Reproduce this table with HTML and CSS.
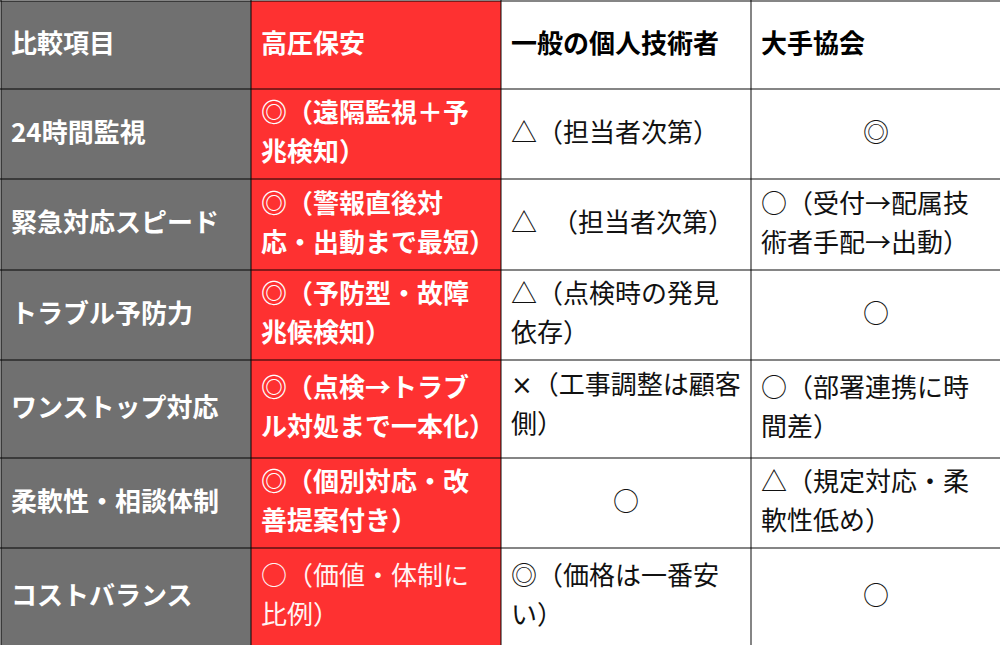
FILE: index.html
```html
<!DOCTYPE html>
<html lang="ja">
<head>
<meta charset="utf-8">
<title>比較表</title>
<link rel="stylesheet" href="styles.css">
</head>
<body>
<table class="cmp">
  <colgroup><col class="c"><col class="c"><col class="c"><col class="c"></colgroup>
  <tr class="r-head">
    <th class="item">比較項目</th>
    <th class="ours">高圧保安</th>
    <th class="other">一般の個人技術者</th>
    <th class="other">大手協会</th>
  </tr>
  <tr class="r90">
    <td class="item">24時間監視</td>
    <td class="ours">◎（遠隔監視＋予兆検知）</td>
    <td class="other">△（担当者次第）</td>
    <td class="other center">◎</td>
  </tr>
  <tr class="r91">
    <td class="item">緊急対応スピード</td>
    <td class="ours">◎（警報直後対応・出動まで最短）</td>
    <td class="other">△<span class="gap"> </span>（担当者次第）</td>
    <td class="other">○（受付→配属技術者手配→出動）</td>
  </tr>
  <tr class="r90">
    <td class="item">トラブル予防力</td>
    <td class="ours">◎（予防型・故障兆候検知）</td>
    <td class="other">△（点検時の発見依存）</td>
    <td class="other center">○</td>
  </tr>
  <tr class="r98">
    <td class="item">ワンストップ対応</td>
    <td class="ours">◎（点検→トラブル対処まで一本化）</td>
    <td class="other latin-first">×（工事調整は顧客側）</td>
    <td class="other">○（部署連携に時間差）</td>
  </tr>
  <tr class="r90">
    <td class="item">柔軟性・相談体制</td>
    <td class="ours">◎（個別対応・改善提案付き）</td>
    <td class="other center">○</td>
    <td class="other">△（規定対応・柔軟性低め）</td>
  </tr>
  <tr class="r98">
    <td class="item">コストバランス</td>
    <td class="ours light">○（価値・体制に比例）</td>
    <td class="other">◎（価格は一番安い）</td>
    <td class="other center">○</td>
  </tr>
</table>
</body>
</html>
```

FILE: styles.css
```css
html, body {
  margin: 0;
  padding: 0;
  background: #ffffff;
}

body {
  width: 1000px;
  height: 645px;
  overflow: hidden;
  font-family: "Noto Sans CJK JP", "Noto Sans", sans-serif;
}

.cmp {
  width: 1000px;
  border-collapse: collapse;
  table-layout: fixed;
}

.c {
  width: 250px;
}

.cmp th,
.cmp td {
  border: 2px solid rgba(0, 0, 0, 0.48);
  padding: 0 8px 8px 9px;
  font-size: 26px;
  line-height: 39px;
  text-align: left;
  vertical-align: middle;
  box-sizing: border-box;
}

.r-head { height: 88px; }
.r90 { height: 90px; }
.r91 { height: 91px; }
.r98 { height: 98px; }

.cmp .item {
  background: #707070;
  color: #ffffff;
  font-weight: 700;
}

.cmp .ours {
  background: #fe3131;
  color: #ffffff;
  font-weight: 700;
}

.cmp .ours.light {
  font-weight: 400;
  color: #fff4f4;
}

.cmp .other {
  background: #ffffff;
  color: #111111;
  font-weight: 400;
}

.cmp th.other {
  font-weight: 700;
  color: #000000;
}

.cmp td.center {
  text-align: center;
  padding-left: 8px;
}

.cmp td.latin-first {
  font-family: "DejaVu Sans", "Noto Sans CJK JP", sans-serif;
}

.gap {
  display: inline-block;
  width: 15px;
}
```
